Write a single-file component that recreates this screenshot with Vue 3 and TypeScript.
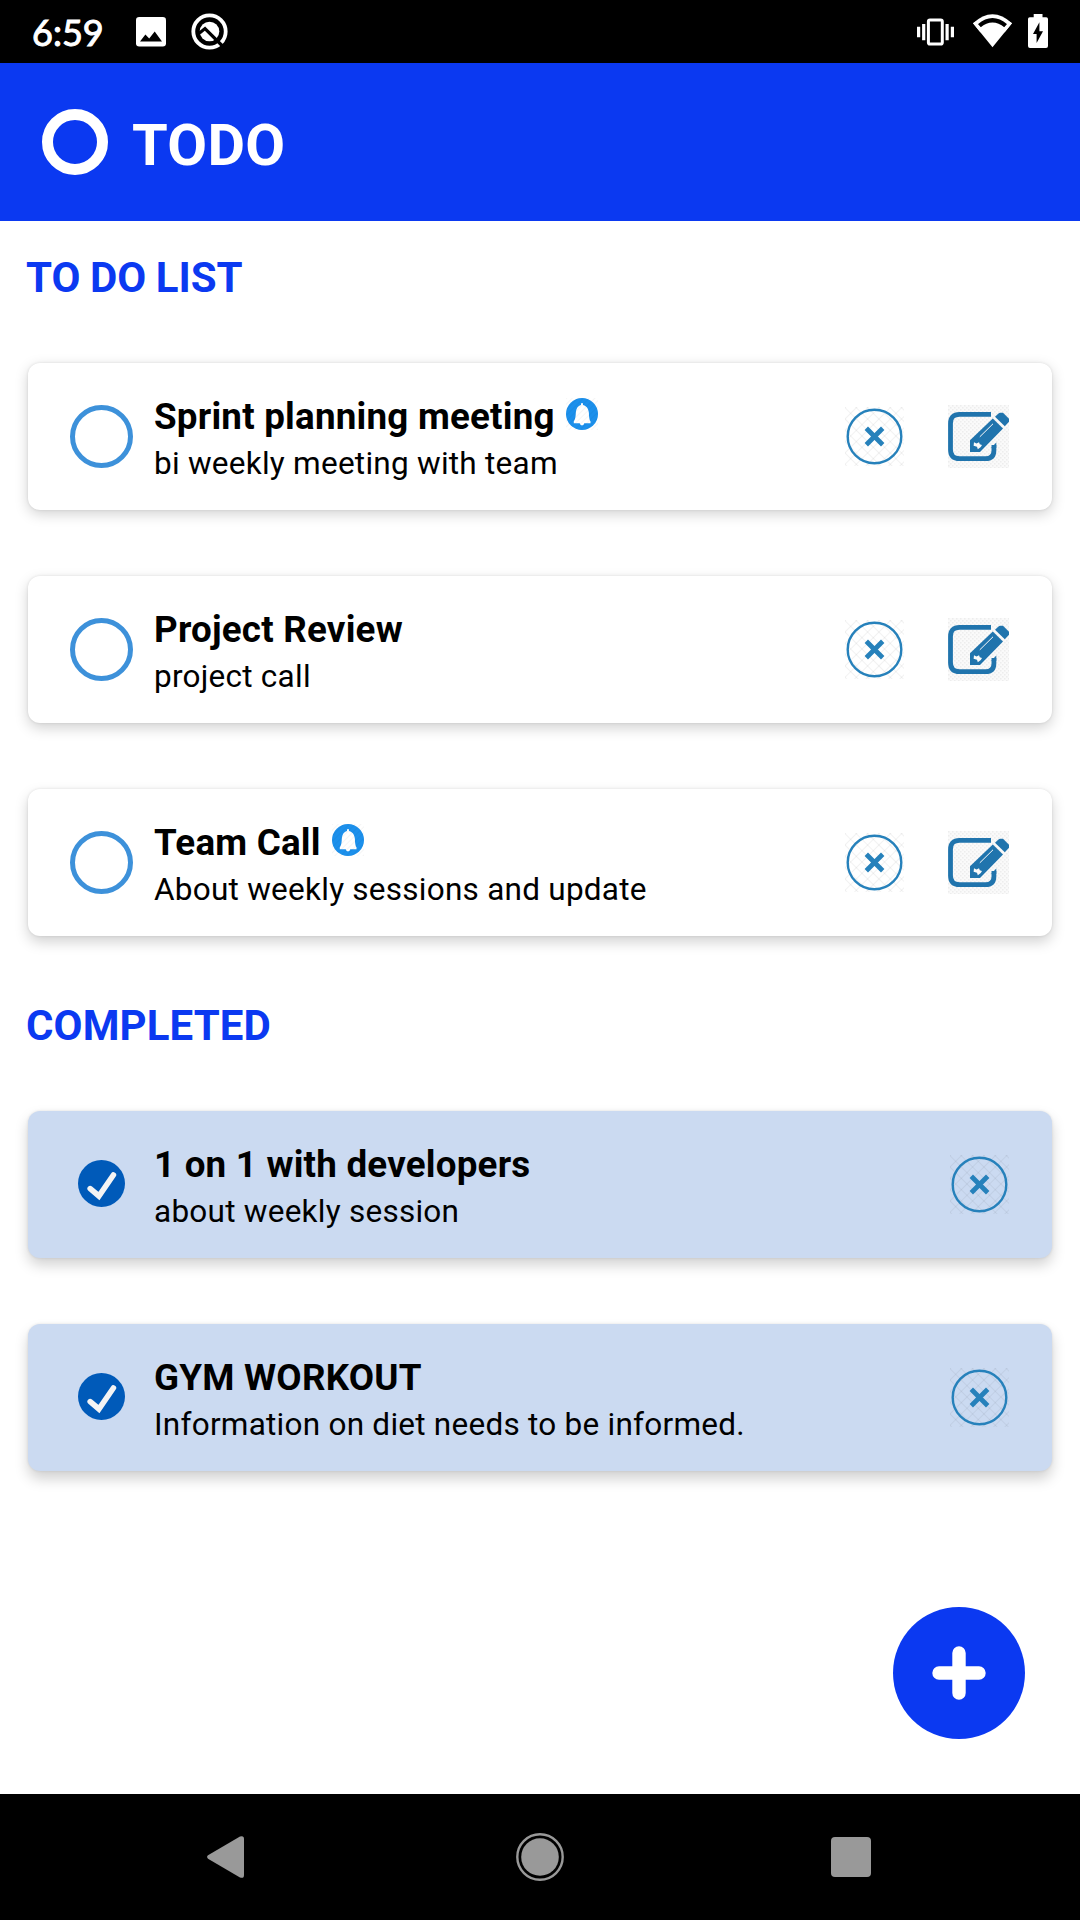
<script setup lang="ts">
interface Task {
  title: string
  note: string
  reminder?: boolean
  depth: number
}

const todo: Task[] = [
  { title: 'Sprint planning meeting', note: 'bi weekly meeting with team', reminder: true, depth: 4 },
  { title: 'Project Review', note: 'project call', depth: 5 },
  { title: 'Team Call', note: 'About weekly sessions and update', reminder: true, depth: 6 },
]

const completed: Task[] = [
  { title: '1 on 1 with developers', note: 'about weekly session', depth: 7 },
  { title: 'GYM WORKOUT', note: 'Information on diet needs to be informed.', depth: 8 },
]

const shadow = (t: Task) => ({
  boxShadow: `0 ${t.depth}px 14px rgba(0, 0, 0, 0.18), 0 0 3px rgba(0, 0, 0, 0.1)`,
})
</script>

<template>
  <div class="screen">
    <svg class="defs" width="0" height="0" aria-hidden="true">
      <defs>
        <pattern id="hatch" width="8" height="8" patternUnits="userSpaceOnUse" patternTransform="rotate(45)">
          <path d="M0 .5H8M.5 0V8" stroke="#000" stroke-opacity=".05" stroke-width="1" />
        </pattern>
        <pattern id="dots" width="4" height="4" patternUnits="userSpaceOnUse">
          <rect width="4" height="4" fill="#fafafa" />
          <path d="M0 0h1.5v1.5H0zM2 2h1.5v1.5H2z" fill="#ededed" />
        </pattern>
        <pattern id="stripes" width="4" height="4" patternUnits="userSpaceOnUse" patternTransform="rotate(45)">
          <path d="M.5 0V4" stroke="#000" stroke-opacity=".04" stroke-width="1" />
        </pattern>
        <symbol id="close" viewBox="0 0 59 59">
          <rect width="59" height="59" fill="url(#hatch)" />
          <circle cx="29.5" cy="29.5" r="26.8" fill="none" stroke="#2681bb" stroke-width="2.4" />
          <path d="M21.3 21.3L37.7 37.7M37.7 21.3L21.3 37.7" stroke="#2681bb" stroke-width="4.8" />
        </symbol>
        <symbol id="edit" viewBox="0 0 61 63">
          <rect width="61" height="63" fill="url(#dots)" />
          <path d="M43 9.4H11.5Q2.5 9.4 2.5 18.4V44.5Q2.5 53.7 11.5 53.7H37.5Q45.9 53.7 45.9 45.5V40" fill="none" stroke="#2074ad" stroke-width="4.8" />
          <path d="M43.5 42.5L48.3 37.5V43H43.5Z" fill="#2074ad" />
          <path d="M22 35.2L44.8 13.4L55 23.6L32 46.9H22Z" fill="#2074ad" />
          <path d="M26 37.3L28.5 38.5L31 37.3L31.8 39.3L34 40L32.8 42L29.8 44.2L29 41.8L25.6 40.8Z" fill="#fafafa" />
          <path d="M31.8 31.8L45 18.8" stroke="#fafafa" stroke-width="1" />
          <path d="M47 11.8L50.5 8.4Q51.2 7.7 52.2 7.7H55L61 13.8V16.8L56.8 21.2Z" fill="#2074ad" />
        </symbol>
        <symbol id="bell" viewBox="0 0 32 32">
          <circle cx="16" cy="16" r="16" fill="#1c90ec" />
          <path d="M15 7V5.3H17V7C21 8 22.7 11.5 22.9 15C23.1 20 23.5 21.5 24.5 23.3V25.3H18.3Q18 27.4 16 27.4T13.7 25.3H7.8V23.3C9 21.5 9.6 20 9.8 15C10 11.5 11.3 8 15 7Z" fill="#fff" />
          <rect width="32" height="32" fill="url(#stripes)" />
        </symbol>
      </defs>
    </svg>

    <div class="status">
      <span class="clock">6:59</span>
      <svg class="picture" width="30" height="30" viewBox="0 0 30 30">
        <rect width="30" height="29.5" rx="3.2" fill="#fff" />
        <path d="M4 24.5L9.4 17.4L13.2 21.6L18.7 14.4L26 24.5Z" fill="#000" />
      </svg>
      <svg width="37" height="37" viewBox="0 0 37 37">
        <circle cx="18.5" cy="18.5" r="16.2" fill="none" stroke="#fff" stroke-width="3.8" />
        <circle cx="18.5" cy="18.5" r="9.8" fill="#fff" />
        <path d="M8.5 20L14 15.6L31.5 33" fill="none" stroke="#000" stroke-width="3.2" />
      </svg>
      <div class="spacer"></div>
      <svg class="vibrate" width="37" height="28" viewBox="0 0 37 28">
        <rect x="11.4" y="1.9" width="13.9" height="24.2" rx="1.6" fill="none" stroke="#fff" stroke-width="3" />
        <path d="M1.6 8.8V19.3M6.7 6V22.2M30.1 6V22.2M35.4 8.8V19.3" stroke="#fff" stroke-width="3.2" />
      </svg>
      <svg class="wifi" width="39" height="34" viewBox="0 0 39 34">
        <path d="M0 9.2Q19.5-8.8 39 9.2L19.5 33.2Z" fill="#fff" />
        <path d="M4.8 10.2Q19.5-2.2 34.2 10.2L31.6 13.5Q19.5 3.6 7.4 13.5Z" fill="#000" />
        <path d="M0 9.2L2.6 7.4L9.2 14.8L7.5 18.4ZM39 9.2L36.4 7.4L29.8 14.8L31.5 18.4Z" fill="#fff" />
      </svg>
      <svg class="battery" width="20" height="34" viewBox="0 0 20 34">
        <path d="M5.7 0H14.5V3.2H18.2Q20 3.2 20 5V32Q20 34 18 34H2Q0 34 0 32V5Q0 3.2 1.8 3.2H5.7Z" fill="#fff" />
        <path d="M11.4 8.2V17.2H15L8.6 29V20H5Z" fill="#000" />
      </svg>
    </div>

    <header class="header">
      <span class="logo"></span>
      <h1>TODO</h1>
    </header>

    <main class="content">
      <h2 class="first">TO DO LIST</h2>
      <section class="list">
        <article v-for="task in todo" :key="task.title" class="card" :style="shadow(task)">
          <div class="mark"><span class="ring"></span></div>
          <div class="text">
            <div class="title">
              {{ task.title }}
              <svg v-if="task.reminder" class="bell" width="32" height="32"><use href="#bell" /></svg>
            </div>
            <div class="note">{{ task.note }}</div>
          </div>
          <svg width="59" height="59"><use href="#close" /></svg>
          <svg class="edit" width="61" height="63"><use href="#edit" /></svg>
        </article>
      </section>

      <h2 class="second">COMPLETED</h2>
      <section class="list">
        <article v-for="task in completed" :key="task.title" class="card done" :style="shadow(task)">
          <div class="mark">
            <svg width="47" height="47" viewBox="0 0 47 47">
              <circle cx="23.5" cy="23.5" r="23.5" fill="#005ab9" />
              <path d="M12.2 28.6L20.9 36L35.4 15" fill="none" stroke="#f4f4f4" stroke-width="5.6" stroke-linecap="round" />
            </svg>
          </div>
          <div class="text">
            <div class="title">{{ task.title }}</div>
            <div class="note">{{ task.note }}</div>
          </div>
          <svg width="59" height="59"><use href="#close" /></svg>
        </article>
      </section>

      <button class="fab" aria-label="Add task">
        <svg width="54" height="54" viewBox="0 0 54 54">
          <path d="M27 7V47M7 27H47" stroke="#fff" stroke-width="13.4" stroke-linecap="round" />
        </svg>
      </button>
    </main>

    <nav class="nav">
      <svg width="37" height="42" viewBox="0 0 37 42">
        <path d="M1 19.3L33 .5Q37-.9 37 3V39Q37 42.9 33 41.5L1 22.7Q-.8 21 1 19.3Z" fill="#999" />
      </svg>
      <svg class="home" width="48" height="48" viewBox="0 0 48 48">
        <circle cx="24" cy="24" r="22.7" fill="none" stroke="#999" stroke-width="2.4" />
        <circle cx="24" cy="24" r="18.8" fill="#999" />
      </svg>
      <span class="recent"></span>
    </nav>
  </div>
</template>

<style>
body {
  background: #fff;
}
</style>

<style scoped>
.screen {
  width: 1080px;
  height: 1920px;
  display: flex;
  flex-direction: column;
  overflow: hidden;
  background: #fff;
  font-family: Roboto, sans-serif;
  color: #000;
}
.defs {
  position: absolute;
}
svg {
  display: block;
  flex: none;
}
.status {
  height: 63px;
  flex: none;
  display: flex;
  align-items: center;
  box-sizing: border-box;
  padding: 0 32px;
  background: #000;
}
.clock {
  width: 104px;
  font: 400 36px/62px Lato, sans-serif;
  -webkit-text-stroke: 1px #fff;
  color: #fff;
}
.picture {
  margin-right: 25px;
}
.spacer {
  flex: 1;
}
.wifi {
  margin: 0 16px 0 19px;
}
.wifi,
.battery {
  margin-top: -1px;
}
.header {
  height: 158px;
  flex: none;
  display: flex;
  align-items: center;
  box-sizing: border-box;
  padding: 0 42px;
  background: #0b39f1;
}
.logo {
  width: 66px;
  height: 66px;
  box-sizing: border-box;
  border: 11px solid #fff;
  border-radius: 50%;
}
h1 {
  margin: 5px 0 0 24px;
  font-size: 57.75px;
  line-height: 68px;
  font-weight: 700;
  letter-spacing: 0.3px;
  color: #fff;
}
.content {
  flex: 1;
  display: flex;
  flex-direction: column;
  padding: 0 28px;
}
h2 {
  margin: 0 0 0 -2px;
  font-size: 42px;
  line-height: 50px;
  font-weight: 700;
  color: #0b39f1;
}
.first {
  margin-top: 32px;
  word-spacing: -0.9px;
}
.second {
  margin-top: 65px;
  letter-spacing: 0.1px;
}
.list {
  display: flex;
  flex-direction: column;
  gap: 66px;
  margin-top: 60px;
}
.card {
  height: 147px;
  display: flex;
  align-items: center;
  box-sizing: border-box;
  padding-right: 43px;
  border-radius: 12px;
  background: #fff;
}
.done {
  background: #cbdaf1;
}
.mark {
  width: 126px;
  box-sizing: border-box;
  padding-left: 42px;
}
.done .mark {
  padding: 0 0 2px 50px;
}
.ring {
  display: block;
  width: 63px;
  height: 63px;
  box-sizing: border-box;
  border: 5px solid #3d91da;
  border-radius: 50%;
}
.text {
  flex: 1;
  padding-top: 4px;
  white-space: nowrap;
}
.title {
  display: flex;
  align-items: center;
  gap: 11px;
  font-size: 36.75px;
  line-height: 44px;
  font-weight: 700;
  letter-spacing: 0.22px;
}
.bell {
  margin-top: -6px;
}
.note {
  margin-top: 6px;
  font-size: 31.5px;
  line-height: 38px;
  letter-spacing: 0.25px;
}
.edit {
  margin-left: 44px;
}
.fab {
  align-self: flex-end;
  display: flex;
  align-items: center;
  justify-content: center;
  width: 132px;
  height: 132px;
  margin: 136px 27px 0 0;
  padding: 0;
  border: 0;
  border-radius: 50%;
  background: #0b39f1;
}
.nav {
  height: 126px;
  flex: none;
  display: flex;
  align-items: center;
  box-sizing: border-box;
  padding: 0 209px 0 207px;
  justify-content: space-between;
  background: #000;
}
.home {
  margin-left: 5px;
}
.recent {
  width: 40px;
  height: 40px;
  border-radius: 4px;
  background: #999;
}
</style>
